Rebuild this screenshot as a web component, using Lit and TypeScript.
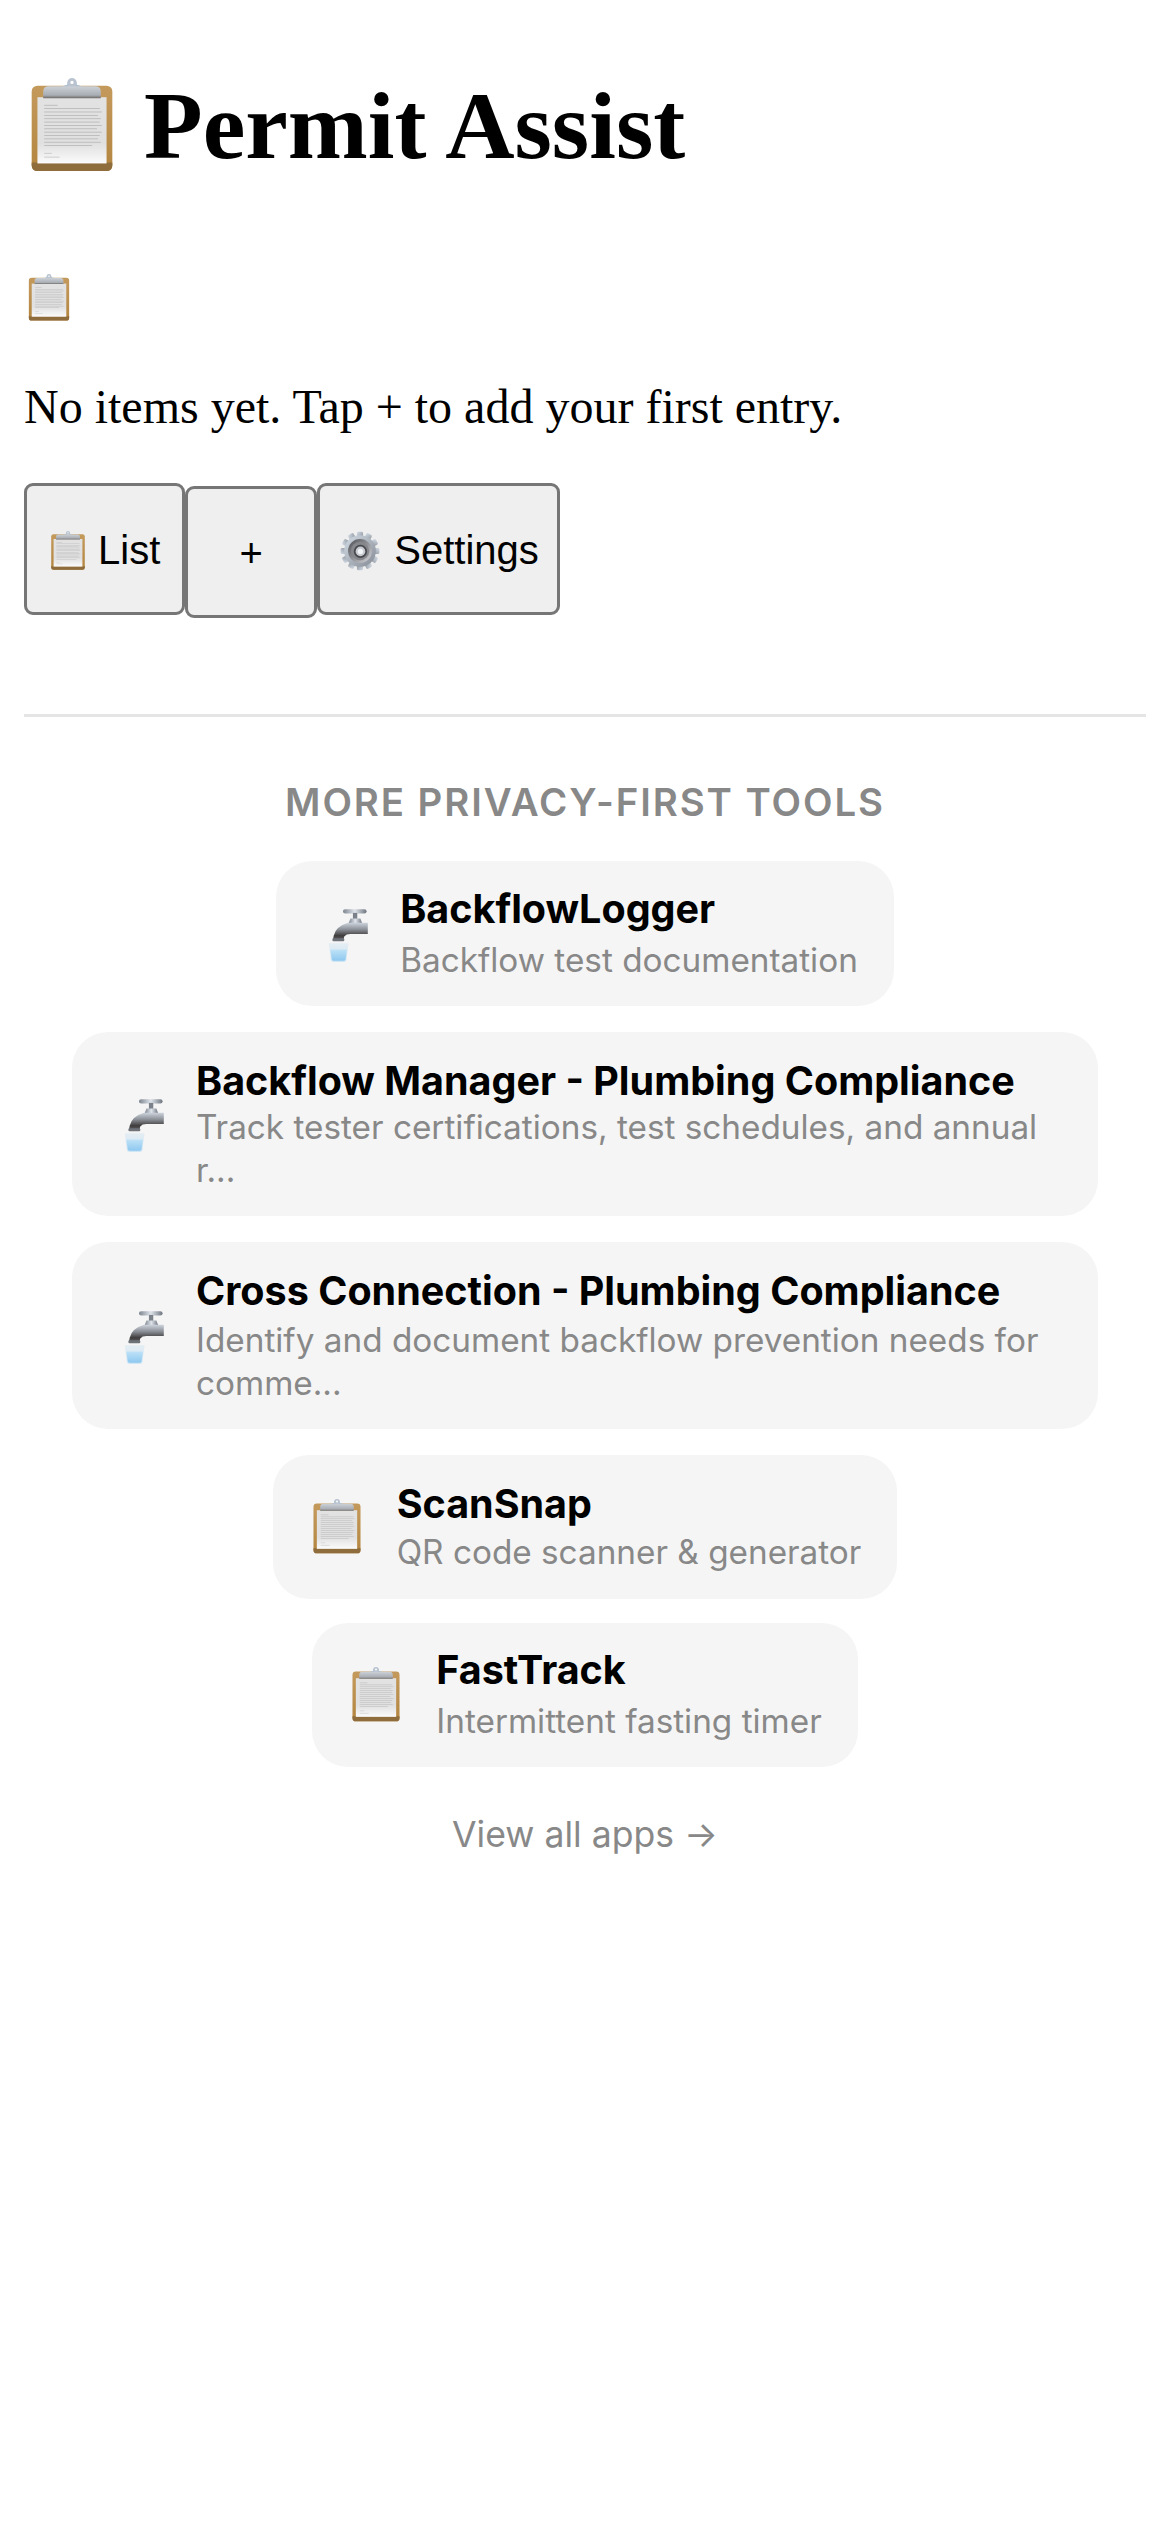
import { LitElement, html, css, svg } from "lit";
import { customElement, property } from "lit/decorators.js";

const lineWidths = [14, 58, 60, 56, 59, 58, 60, 55, 60, 58, 56, 59, 50];

@customElement("emoji-icon")
class EmojiIcon extends LitElement {
  @property() kind = "clipboard";
  @property({ type: Number }) size = 60;
  static styles = css`
    :host { display: inline-block; flex: none; line-height: 0; }
    svg { display: block; overflow: visible; }
  `;
  clipboard() {
    return svg`
      <defs>
        <linearGradient id="wood" x1="0" y1="0" x2="0" y2="1"><stop offset="0" stop-color="#c49a5c"/><stop offset="1" stop-color="#b3853f"/></linearGradient>
        <linearGradient id="paper" x1="0" y1="0" x2="0" y2="1"><stop offset="0" stop-color="#e2e2e2"/><stop offset=".7" stop-color="#e0e0e0"/><stop offset="1" stop-color="#fbfbfb"/></linearGradient>
        <linearGradient id="clip" x1="0" y1="0" x2="0" y2="1"><stop offset="0" stop-color="#ccd1d8"/><stop offset=".75" stop-color="#a9aeb5"/><stop offset="1" stop-color="#6e6a66"/></linearGradient>
      </defs>
      <rect x="8" y="8" width="84" height="89" rx="6" fill="url(#wood)"/>
      <path d="M8 88H92V91Q92 97 86 97H14Q8 97 8 91Z" fill="#8f6c3c"/>
      <rect x="14" y="20" width="72" height="69" fill="url(#paper)"/>
      ${lineWidths.map((w, i) => svg`<rect x="21" y=${28 + i * 3.5} width=${w} height="0.8" fill="#b4b4b4"/>`)}
      <rect x="21" y="78" width="8" height="0.8" fill="#c2c2c2"/>
      <rect x="21" y="82" width="16" height="0.8" fill="#c2c2c2"/>
      <path d="M38 9 L45 7 A5 5 0 0 1 55 7 L62 9Z" fill="#a9bdd6"/>
      <circle cx="50" cy="5" r="5" fill="#b9c3d0"/>
      <circle cx="50" cy="4.6" r="1.7" fill="#fff"/>
      <path d="M20 21V14Q20 8.500 26 8.500H74Q80 8.500 80 14V21Z" fill="url(#clip)"/>
    `;
  }
  faucet() {
    return svg`
      <defs>
        <linearGradient id="metal" x1="0" y1="0" x2="0" y2="1"><stop offset="0" stop-color="#cdd3dc"/><stop offset=".4" stop-color="#8d9299"/><stop offset=".8" stop-color="#3f3c3d"/><stop offset="1" stop-color="#5a5758"/></linearGradient>
        <linearGradient id="cap" x1="0" y1="0" x2="1" y2="0"><stop offset="0" stop-color="#7d858f"/><stop offset=".5" stop-color="#dfe4ea"/><stop offset="1" stop-color="#6f7680"/></linearGradient>
        <linearGradient id="water" x1="0" y1="0" x2="0" y2="1"><stop offset="0" stop-color="#bfe2f8"/><stop offset="1" stop-color="#8ec8ef"/></linearGradient>
        <linearGradient id="glass" x1="0" y1="0" x2="0" y2="1"><stop offset="0" stop-color="#e4edf3"/><stop offset="1" stop-color="#cfe6f5"/></linearGradient>
      </defs>
      <rect x="50" y="10" width="38" height="7" rx="3.500" fill="url(#cap)"/>
      <rect x="66" y="16" width="7" height="10" fill="#7a818b"/>
      <path d="M59 33L62 25H78L81 33Z" fill="url(#cap)"/>
      <path d="M58 32H90V50H62Q55 50 52 54L51 58H34L35 53Q38 38 58 32Z" fill="url(#metal)"/>
      <rect x="33" y="57" width="19" height="4.500" rx="1.500" fill="#6e7279"/>
      <path d="M27 65H59L55.500 92Q55 95 51 95H35Q31 95 30.500 92Z" fill="url(#glass)"/>
      <path d="M29.500 75H56.500L54 91Q53.500 93 50.500 93H35.500Q32.500 93 32 91Z" fill="url(#water)"/>
    `;
  }
  gear() {
    const teeth = Array.from({ length: 12 }, (_, i) => i * 30);
    return svg`
      <defs>
        <linearGradient id="g" x1="0" y1="0" x2="1" y2="1"><stop offset="0" stop-color="#d3dce6"/><stop offset="1" stop-color="#858b95"/></linearGradient>
        <linearGradient id="r" x1="0" y1="0" x2="1" y2="1"><stop offset="0" stop-color="#4d4e53"/><stop offset="1" stop-color="#d4d6da"/></linearGradient>
      </defs>
      ${teeth.map((a) => svg`<rect x="43" y="6" width="14" height="18" rx="3" fill="url(#g)" transform="rotate(${a} 50 50)"/>`)}
      <circle cx="50" cy="50" r="36" fill="url(#g)"/>
      <circle cx="50" cy="50" r="27" fill="url(#r)"/>
      <circle cx="50" cy="50" r="21" fill="#85878c"/>
      <circle cx="51" cy="51" r="15" fill="#47484c"/>
      <circle cx="51" cy="51" r="11" fill="#c8ccd2"/>
      <circle cx="51" cy="51" r="6" fill="#f2f4f6"/>
    `;
  }
  render() {
    const body = this.kind === "faucet" ? this.faucet() : this.kind === "gear" ? this.gear() : this.clipboard();
    return html`<svg viewBox="0 0 100 100" width=${this.size} height=${this.size}>${body}</svg>`;
  }
}

const apps = [
  { icon: "faucet", name: "BackflowLogger", desc: "Backflow test documentation", nameLine: 48, nameGap: 6, descLine: 43 },
  { icon: "faucet", name: "Backflow Manager - Plumbing Compliance", desc: "Track tester certifications, test schedules, and annual r...", nameLine: 50, nameGap: 0, descLine: 43 },
  { icon: "faucet", name: "Cross Connection - Plumbing Compliance", desc: "Identify and document backflow prevention needs for comme...", nameLine: 51, nameGap: 2, descLine: 43 },
  { icon: "clipboard", name: "ScanSnap", desc: "QR code scanner & generator", nameLine: 50, nameGap: 0, descLine: 46 },
  { icon: "clipboard", name: "FastTrack", desc: "Intermittent fasting timer", nameLine: 47, nameGap: 6, descLine: 43 },
];

@customElement("app-root")
export class AppRoot extends LitElement {
  static styles = css`
    :host { display: block; min-height: 2532px; background: #fff; color: #000; font-family: "Liberation Serif", serif; box-sizing: border-box; padding: 64px 24px 0; }
    h1 { margin: 0 0 64px; display: flex; align-items: center; gap: 24px; font-size: 96px; line-height: 124px; font-weight: 700; }
    .tab-icon { display: block; padding: 22px 0 0 1px; margin-bottom: 57px; height: 48px; }
    p { margin: 0 0 48px; font-size: 48px; line-height: 56px; }
    .toolbar { display: flex; align-items: flex-start; }
    button { min-width: 132px; height: 132px; margin: 0; padding: 3px 18px 0; box-sizing: border-box; display: inline-flex; align-items: center; justify-content: center; gap: 12px; background: #efefef; border: 3px solid #767676; border-radius: 9px; font: 40px "Liberation Sans", Arial, sans-serif; color: #000; }
    .list { padding-left: 21px; padding-right: 22px; gap: 10px; }
    .plus { margin-top: 3px; }
    .more { margin-top: 96px; border-top: 3px solid #e5e5e5; padding-top: 63px; display: flex; flex-direction: column; align-items: center; font-family: Inter, "Liberation Sans", sans-serif; }
    .more h2 { margin: 0 0 37px; font-size: 38.4px; line-height: 44px; font-weight: 600; color: #888; letter-spacing: 1.92px; text-transform: uppercase; }
    .card { display: flex; align-items: center; gap: 26px; max-width: 1026px; box-sizing: border-box; padding: 24px 36px; margin-bottom: 26px; background: #f5f5f5; border-radius: 36px; color: #000; text-decoration: none; }
    .card:nth-of-type(4) { margin-bottom: 24px; }
    .slot { width: 62px; flex: none; display: flex; justify-content: flex-start; }
    .card-name { font-size: 39.5px; font-weight: 700; }
    .card-desc { font-size: 33.3px; color: #888; }
    .view-all { margin-top: 20px; font-size: 35.6px; line-height: 44px; color: #888; text-decoration: none; }
  `;
  render() {
    return html`
      <h1><emoji-icon kind="clipboard" .size=${96}></emoji-icon>Permit Assist</h1>
      <div class="tab-icon"><emoji-icon kind="clipboard" .size=${48}></emoji-icon></div>
      <p>No items yet. Tap + to add your first entry.</p>
      <div class="toolbar">
        <button class="list"><emoji-icon kind="clipboard" .size=${40}></emoji-icon>List</button>
        <button class="plus">+</button>
        <button><emoji-icon kind="gear" .size=${44}></emoji-icon>Settings</button>
      </div>
      <section class="more">
        <h2>More privacy-first tools</h2>
        ${apps.map((a) => html`
          <a class="card" href="#">
            <span class="slot"><emoji-icon kind=${a.icon} .size=${a.icon === "faucet" ? 62 : 56}></emoji-icon></span>
            <div>
              <div class="card-name" style="line-height:${a.nameLine}px;margin-bottom:${a.nameGap}px">${a.name}</div>
              <div class="card-desc" style="line-height:${a.descLine}px">${a.desc}</div>
            </div>
          </a>`)}
        <a class="view-all" href="#">View all apps →</a>
      </section>
    `;
  }
}
